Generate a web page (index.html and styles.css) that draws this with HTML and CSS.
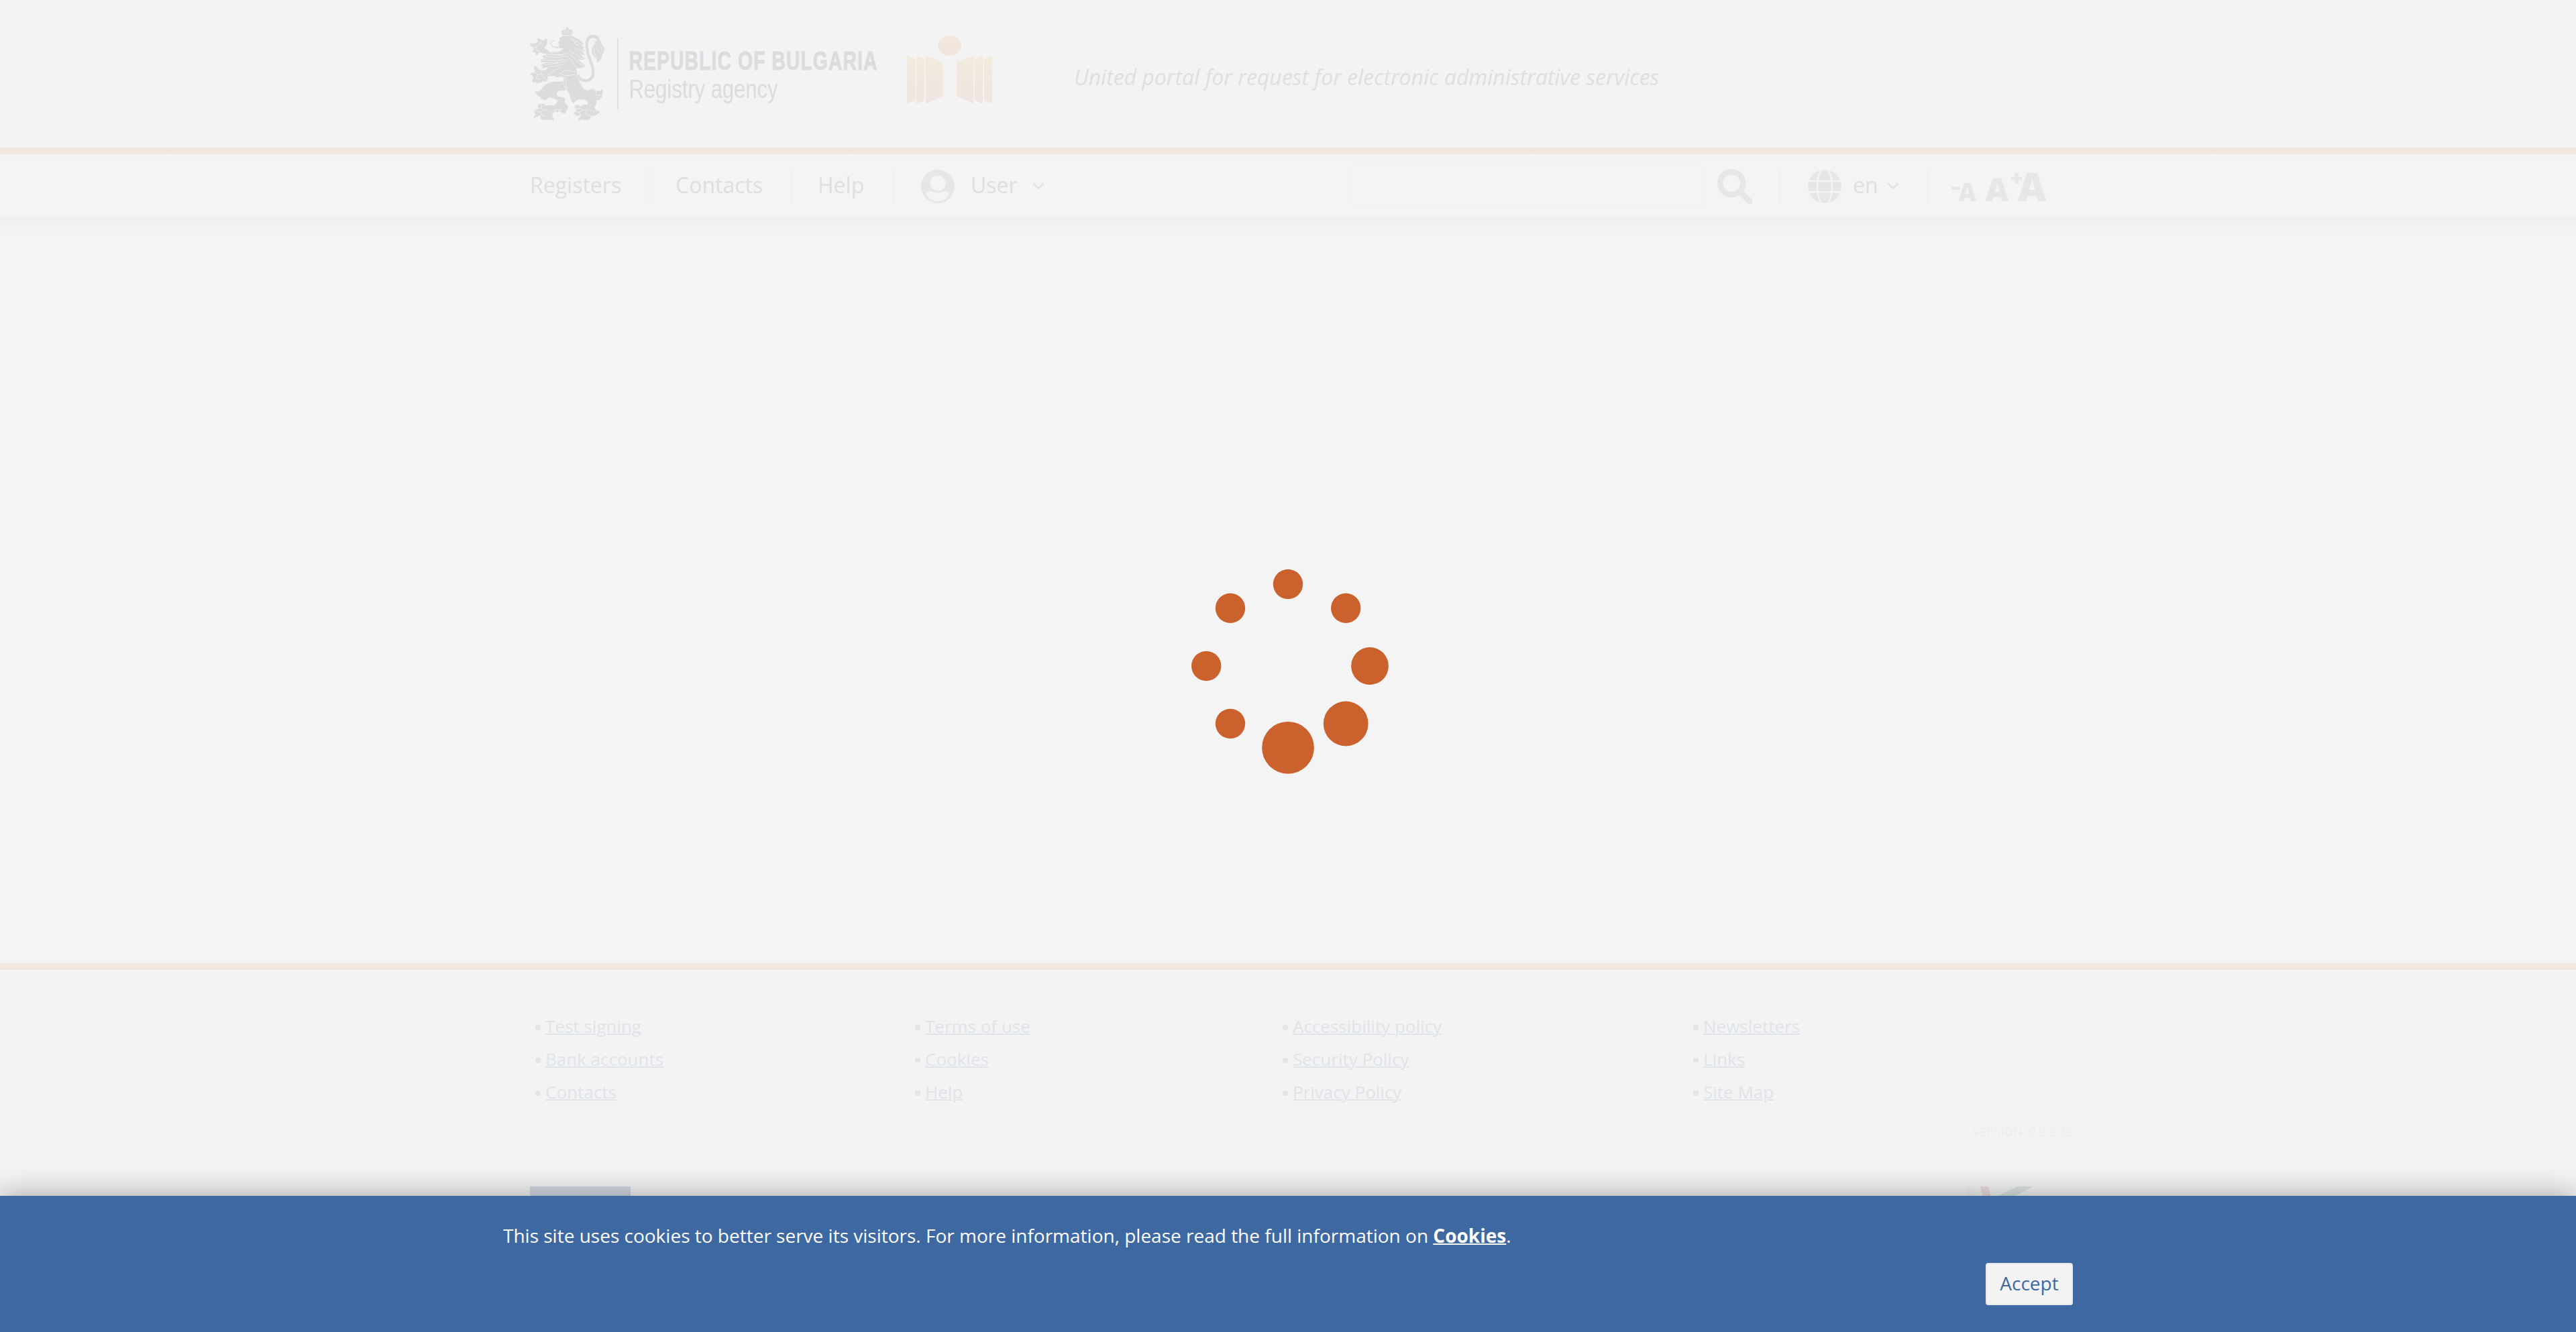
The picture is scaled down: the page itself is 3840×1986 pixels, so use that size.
FILE: index.html
```html
<!DOCTYPE html>
<html lang="en">
<head>
<meta charset="utf-8">
<title>Registry agency</title>
<link rel="stylesheet" href="styles.css">
</head>
<body>
<header class="header">
  <div class="container brand">
    <svg class="lion" viewBox="0 0 420 480" aria-hidden="true">
      <g class="ink outline">
        <path d="M176 68L172 47L183 44L191 42L194 38L190 36L195 34V30H198V34L203 36L199 38L202 42L212 44L220 47L216 68Z"/>
        <path d="M180 71H214L232 78L250 88L262 98L271 108L258 110L273 124L262 127L275 138L262 139L274 154L254 153L277 175Q262 180 245 174Q254 190 278 204Q262 216 236 215Q238 230 240 242L234 248L250 275L262 298Q272 314 290 316Q302 304 318 310L326 318L345 318L354 309L355 325L350 335L352 345L340 349L345 356L326 358V378L318 388L322 402L333 408L341 408L340 416L330 416L326 424L312 428L302 426L300 440L288 446L276 444L258 443L252 449L246 448L248 438L258 432L254 424L242 428L236 424L226 418V411L240 412L236 404L240 398L230 392L234 382L246 380L258 386L270 378L282 380L290 376L288 362L270 354L250 354Q232 358 226 371Q212 364 210 336L194 308Q184 318 168 313Q148 318 148 334Q154 346 178 346L186 350L185 368L200 386L196 400L190 404L190 414L178 417L162 404L154 412L140 406L132 418L128 432L136 440L134 450L128 444L112 446L90 446L78 440L80 432L74 424L62 432L56 432L48 441V430L56 426L50 412L56 402L70 397L66 390L70 374L80 378L90 375L104 384L116 380L136 384L148 374L156 360L134 348L120 344L106 352L98 357L80 353L78 344L66 338L52 320Q70 322 78 314Q98 280 140 276L178 276L184 262L174 250L152 256L140 248L116 250L106 248L110 264L100 276L88 270L80 278L62 282L54 276L44 278L40 268L46 260L40 246L30 244L36 236L48 236L54 228L50 218L50 208L60 210L64 218L80 226L100 224L116 208L84 216L90 206L78 202L106 192L80 187L82 176L106 172L90 168L86 160L98 158L110 152L88 148L74 142L64 155L56 154L56 144L44 142L48 130L44 122L33 114V106L54 106L66 96L62 82L72 82L80 90L96 92L98 82L106 88L106 106L98 116L92 124L104 132L122 144L150 144Q168 142 180 126L160 118L158 112L170 108L158 103L157 97L166 90L161 82Z"/>
        <path d="M140 93Q120 95 125 109Q132 122 155 119L184 120L184 126L158 124Q132 126 123 108Q121 91 140 91Z"/>
        <path d="M322 94H348V103H322ZM320 106Q344 100 350 108Q362 118 362 134Q360 146 352 152Q354 172 332 190Q328 184 330 174Q308 156 307 136Q308 116 320 106Z"/>
      </g>
      <path class="tail" d="M335 94Q336 73 312 72Q283 74 284 112Q286 150 300 180Q318 226 311 250Q298 276 270 270Q252 266 242 246"/>
      <path class="cut" d="M174 69H218M183 60V48M192 60V46M201 60V46M210 60V48M208 80L226 90L234 110L250 113M222 92Q240 90 246 102L266 110M236 122Q246 138 274 138M232 122Q230 140 262 152M212 142Q232 148 250 166L274 176M206 154Q224 160 236 180Q250 200 276 205M190 158Q206 164 222 190Q232 212 246 214M158 118L158 130L182 128M120 140L132 154L180 158M108 153Q160 158 200 148M98 160Q140 172 190 162M84 178Q140 184 200 176M86 188Q140 196 190 184M100 200Q130 200 160 190M116 209Q160 206 176 196M168 210Q140 220 126 236L108 244M168 242Q174 222 204 226L234 232M168 242Q190 250 208 248L232 242M176 258Q196 264 192 290L194 310M182 262L192 252M180 276Q178 296 190 308M66 100L74 112L60 118L46 122M78 92L76 104L90 112M60 118L58 134L72 140M48 234L64 242L80 242L84 228M64 242L58 262L78 266M84 242L94 262L108 270M66 396L82 394L84 380M82 394L92 402L110 404L128 420M92 402L80 412L58 408M80 412L82 426L98 430M138 404L150 400L170 402M240 396L252 394L258 386M252 394L262 402L250 412L238 412M262 402L280 404L294 396M280 404L282 424L300 428M250 412L258 432M300 404L320 408M326 318L324 334L344 338M328 108L330 130L348 152M340 108Q354 124 354 142M316 112Q310 140 330 172"/>
    </svg>
    <svg class="wordmark" viewBox="919 30 561 160" role="img" aria-label="Republic of Bulgaria, Registry agency">
      <defs>
        <linearGradient id="disc" x1="0" y1="0" x2="0" y2="1"><stop offset="0" stop-color="#f2e8dc"/><stop offset="1" stop-color="#f0e4df"/></linearGradient>
        <linearGradient id="pages" gradientUnits="userSpaceOnUse" x1="0" y1="83" x2="0" y2="154"><stop offset="0" stop-color="#f3eadd"/><stop offset="1" stop-color="#f0e4e0"/></linearGradient>
      </defs>
      <rect x="920" y="57" width="1.6" height="106" class="ink"/>
      <text class="mark-bold" x="937.500" y="103.600" textLength="371" lengthAdjust="spacingAndGlyphs">REPUBLIC OF BULGARIA</text>
      <text class="mark" x="937.500" y="145.800" textLength="222" lengthAdjust="spacingAndGlyphs">Registry agency</text>
      <ellipse cx="1415.6" cy="67.7" rx="17.5" ry="15.3" fill="url(#disc)"/>
      <path fill="url(#pages)" d="M1352 83L1364.500 88V150L1352 154.500ZM1366 83L1378 88V150L1366 154.500ZM1380 83L1405.500 92.500V143.500L1380 154.500ZM1479 83L1467 88V150L1479 154.500ZM1465.300 83L1453 88V150L1465.300 154.500ZM1451.500 83L1426 92.500V143.500L1451.500 154.500Z"/>
    </svg>
    <p class="tagline">United portal for request for electronic administrative services</p>
  </div>
</header>
<div class="stripe"></div>
<nav class="nav">
  <div class="container bar">
    <a class="item registers"><span>Registers</span></a><i class="sep"></i>
    <a class="item contacts"><span>Contacts</span></a><i class="sep"></i>
    <a class="item help"><span>Help</span></a><i class="sep"></i>
    <a class="item user">
      <svg class="icon" viewBox="0 0 50 50"><circle cx="25" cy="25" r="25" fill="#e6e6e6"/><ellipse cx="25" cy="20.300" rx="11.700" ry="11.300" fill="#f4f4f4"/><path d="M7.500 37Q9 32 14 31.500Q25 37.500 36 31.500Q41 32 42.500 37Q36 47 25 47T7.500 37Z" fill="#f4f4f4"/></svg>
      <span class="name">User</span>
      <svg class="chev" viewBox="0 0 18 12"><path d="M1.500 1.500L9 9L16.500 1.500"/></svg>
    </a>
    <div class="tools">
      <div class="search"></div>
      <svg class="glass" viewBox="0 0 52 52"><circle cx="21.300" cy="21.200" r="17" fill="none" stroke="#e6e6e6" stroke-width="8.400"/><path d="M35 35L48 48" stroke="#e6e6e6" stroke-width="9" stroke-linecap="round"/></svg>
      <i class="sep"></i>
      <div class="lang">
        <svg class="icon" viewBox="0 0 50 50"><circle cx="25" cy="25" r="25" fill="#e6e6e6"/><g fill="none" stroke="#f4f4f4" stroke-width="2.600"><path d="M0 17H50M0 33.300H50"/><ellipse cx="25" cy="25" rx="11" ry="27"/></g></svg>
        <span>en</span>
        <svg class="chev" viewBox="0 0 18 12"><path d="M1.500 1.500L9 9L16.500 1.500"/></svg>
      </div>
      <i class="sep"></i>
      <svg class="sizes" viewBox="2908 234 150 88">
        <path d="M2909 278.500H2922V283H2909ZM2998 263.700H3003.400V258H3008.600V263.700H3014V268.600H3008.600V274H3003.400V268.600H2998Z"/>
        <text x="2919.700" y="300" font-size="36.400" textLength="26" lengthAdjust="spacingAndGlyphs">A</text>
        <text x="2959.700" y="300" font-size="47.600" textLength="34.500" lengthAdjust="spacingAndGlyphs">A</text>
        <text x="3008" y="300" font-size="58.800" textLength="42.500" lengthAdjust="spacingAndGlyphs">A</text>
      </svg>
    </div>
  </div>
</nav>
<main class="main"></main>
<div class="stripe"></div>
<footer class="footer">
  <div class="container">
    <div class="links">
      <ul><li><a>Test signing</a></li><li><a>Bank accounts</a></li><li><a>Contacts</a></li></ul>
      <ul><li><a>Terms of use</a></li><li><a>Cookies</a></li><li><a>Help</a></li></ul>
      <ul><li><a>Accessibility policy</a></li><li><a>Security Policy</a></li><li><a>Privacy Policy</a></li></ul>
      <ul><li><a>Newsletters</a></li><li><a>Links</a></li><li><a>Site Map</a></li></ul>
    </div>
    <p class="version">VERSION: 0.9.2.29</p>
    <div class="funds">
      <svg class="flag" viewBox="0 0 150 100"><path fill="#d4d9e2" d="M0 0H150V100H0Z"/><path fill="#dedfcf" d="M74.500 10L76.300 16H82L77.400 19.500L79 25L74.500 21.700L70 25L71.600 19.500L67 16H72.700Z"/></svg>
      <svg class="good" viewBox="2930 1769 160 60"><path fill="#f0f0f0" d="M2932 1769H2943.500V1829H2930Z"/><path fill="#eddcdc" d="M2952 1769H2963.700L2979 1825H2966Z"/><path fill="#dae5df" d="M3007 1769H3030.500L2956 1809L2950 1797.500Z"/></svg>
    </div>
  </div>
</footer>
<div class="spinner">
  <svg viewBox="1740 820 360 360"><circle cx="1920" cy="871" r="22.200"/><circle cx="2006.200" cy="906.800" r="22.200"/><circle cx="2042" cy="993" r="27.900"/><circle cx="2006.200" cy="1079" r="33.400"/><circle cx="1920" cy="1114.800" r="38.900"/><circle cx="1834" cy="1079" r="22.200"/><circle cx="1798.200" cy="993" r="22.200"/><circle cx="1834" cy="906.800" r="22.200"/></svg>
</div>
<div class="cookies">
  <div class="container">
    <p class="notice">This site uses cookies to better serve its visitors. For more information, please read the full information on <a>Cookies</a>.</p>
    <button class="accept">Accept</button>
  </div>
</div>
</body>
</html>
```
FILE: styles.css
```css
* { box-sizing: border-box; margin: 0; padding: 0; }
html, body { height: 1986px; overflow: hidden; }
body { background: #f4f4f4; font-family: "Open Sans", "Noto Sans", sans-serif; font-size: 32px; color: #dfdfdf; }
.container { width: 2340px; margin: 0 auto; }
body > * > .container { margin-left: 750px; }

.header { height: 220px; background: #f3f3f3; }
.brand { display: flex; align-items: flex-start; padding: 30px 0 0 30px; }
.lion { width: 140px; height: 160px; flex: none; }
.ink { fill: #dcdcdc; }
.outline { stroke: #dcdcdc; stroke-width: 2; stroke-linejoin: round; }
.tail { fill: none; stroke: #dcdcdc; stroke-width: 13; }
.cut { fill: none; stroke: #f3f3f3; stroke-width: 2.4; }
.wordmark { width: 561px; height: 160px; margin-left: -1px; flex: none; }
.mark, .mark-bold { fill: #dcdcdc; font-family: "Liberation Sans Narrow", "Liberation Sans", sans-serif; font-size: 39px; }
.mark-bold { font-weight: 700; letter-spacing: 1.5px; stroke: #dcdcdc; stroke-width: .8; }
.tagline { margin: 63px 0 0 121px; font-style: italic; line-height: 44px; letter-spacing: -.02px; white-space: nowrap; }

.stripe { height: 10px; background: linear-gradient(#f2e8dc, #f0e4dd); }

.nav { height: 116px; border-top: 2px solid #f5f5f5; background: linear-gradient(#f2f2f2 0 2px, #f4f4f4 2px 90px, #f0f0f0 90px 102px, #f2f2f2 102px); }
.bar { display: flex; align-items: center; height: 92px; padding-left: 40px; white-space: nowrap; }
.item { display: flex; align-items: center; line-height: 44px; }
.item span, .lang span { margin-bottom: 4px; }
.registers { width: 177px; }
.contacts { width: 210px; padding-left: 38px; }
.help { width: 150px; padding-left: 38px; }
.user { padding-left: 40px; }
.user .name { margin-left: 24px; width: 92px; }
.sep { width: 2px; height: 51px; background: #f0f0f0; flex: none; }
.icon { width: 50px; height: 50px; }
.chev { width: 18px; height: 12px; fill: none; stroke: #e3e3e3; stroke-width: 2.6; }
.tools { display: flex; align-items: center; margin-left: auto; width: 1079px; }
.search { width: 529px; height: 64px; border: 2px solid #f2f2f2; border-radius: 6px; }
.glass { width: 52px; height: 52px; margin: 0 40px 0 20px; }
.lang { display: flex; align-items: center; width: 219px; padding-left: 41px; }
.lang span { margin-left: 17px; width: 51px; line-height: 44px; }
.sizes { width: 150px; height: 88px; margin-left: 33px; flex: none; overflow: visible; fill: #e6e6e6; font-weight: 800; }

.main { height: 1090px; background: linear-gradient(#f4f4f4 0 1086px, #f2f2f2 1086px); }

.footer { height: 540px; padding-top: 61px; background: #f3f3f3; overflow: hidden; }
.links { display: grid; grid-template-columns: 566px 548px 612px 1fr; padding-left: 48px; font-size: 26px; }
.links ul { list-style: none; }
.links li { display: flex; align-items: center; height: 49.4px; line-height: 36px; }
.links li::before { content: ""; width: 8px; height: 8px; border-radius: 3px; background: #e5e5e5; margin-right: 7px; }
.links a { margin-bottom: 4px; color: #dfe4ea; text-decoration: underline; text-decoration-thickness: 2px; }
.version { margin: 19px 0 0 40px; height: 33px; line-height: 26px; border-bottom: 2px solid #f0f0f0; font-size: 18px; color: #ededed; text-align: right; }
.funds { display: flex; justify-content: space-between; margin-top: 62px; padding-left: 40px; }
.flag { width: 150px; height: 100px; }
.good { width: 160px; height: 60px; }

.spinner { position: absolute; left: 1740px; top: 820px; width: 360px; height: 360px; }
.spinner svg { display: block; fill: #cb622d; }

.cookies { position: absolute; left: 0; bottom: 0; width: 3840px; height: 203px; background: #3e68a2; color: #fff; font-size: 28px; box-shadow: 0 0 40px rgba(0, 0, 0, .35); }
.cookies .container { display: flex; flex-direction: column; }
.notice { margin-top: 39px; line-height: 40px; white-space: nowrap; }
.notice a { font-weight: 700; text-decoration: underline; text-decoration-thickness: 2px; }
.accept { align-self: flex-end; width: 130px; height: 63px; margin-top: 21px; padding-bottom: 3px; border: 2px solid #e8e8e8; border-radius: 4px; background: #f3f3f3; color: #3e68a2; font: 28px "Open Sans", "Noto Sans", sans-serif; }
```
